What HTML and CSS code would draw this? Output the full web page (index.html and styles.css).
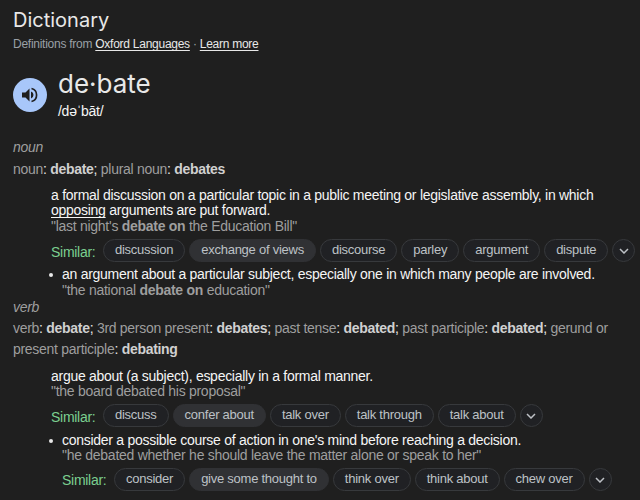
FILE: index.html
```html
<!DOCTYPE html>
<html lang="en">
<head>
<meta charset="utf-8">
<title>Dictionary</title>
<link rel="stylesheet" href="styles.css">
</head>
<body>
<main class="dictionary">
  <h1 class="title">Dictionary</h1>
  <p class="source">Definitions from <a>Oxford Languages</a> · <a>Learn more</a></p>
  <header class="headword">
    <button class="listen" aria-label="Listen">
      <svg viewBox="0 0 20 20" width="20" height="20"><path d="M2 7.500h3.500L9.500 3.500v13L5.500 12.500H2z"/><path d="M11 6.500a3.700 3.700 0 0 1 0 7z"/><path class="wave" d="M11.500 3.500a6.700 6.700 0 0 1 0 13"/></svg>
    </button>
    <div>
      <h2 class="word">de·bate</h2>
      <p class="phonetic">/dəˈbāt/</p>
    </div>
  </header>

  <section class="noun">
    <h3 class="pos">noun</h3>
    <p class="forms">noun<i>:</i> <b>debate</b><i>;</i> plural noun<i>:</i> <b>debates</b></p>
    <div class="sense">
      <p>a formal discussion on a particular topic in a public meeting or legislative assembly, in which<br><u>opposing</u> arguments are put forward.</p>
      <p class="example">"last night's <b>debate on</b> the Education Bill"</p>
      <div class="similar"><span class="label">Similar:</span><span class="chip">discussion</span><span class="chip filled">exchange of views</span><span class="chip">discourse</span><span class="chip">parley</span><span class="chip">argument</span><span class="chip">dispute</span><span class="more"><svg viewBox="0 0 10 6" width="10" height="6"><path d="M1 1l4 4 4-4"/></svg></span></div>
    </div>
    <div class="sense sub">
      <p>an argument about a particular subject, especially one in which many people are involved.</p>
      <p class="example">"the national <b>debate on</b> education"</p>
    </div>
  </section>

  <section class="verb">
    <h3 class="pos">verb</h3>
    <p class="forms">verb<i>:</i> <b>debate</b><i>;</i> 3rd person present<i>:</i> <b>debates</b><i>;</i> past tense<i>:</i> <b>debated</b><i>;</i> past participle<i>:</i> <b>debated</b><i>;</i> gerund or<br>present participle<i>:</i> <b>debating</b></p>
    <div class="sense">
      <p>argue about (a subject), especially in a formal manner.</p>
      <p class="example">"the board debated his proposal"</p>
      <div class="similar"><span class="label">Similar:</span><span class="chip">discuss</span><span class="chip filled">confer about</span><span class="chip">talk over</span><span class="chip">talk through</span><span class="chip">talk about</span><span class="more"><svg viewBox="0 0 10 6" width="10" height="6"><path d="M1 1l4 4 4-4"/></svg></span></div>
    </div>
    <div class="sense sub">
      <p>consider a possible course of action in one's mind before reaching a decision.</p>
      <p class="example">"he debated whether he should leave the matter alone or speak to her"</p>
      <div class="similar"><span class="label">Similar:</span><span class="chip">consider</span><span class="chip filled">give some thought to</span><span class="chip">think over</span><span class="chip">think about</span><span class="chip">chew over</span><span class="more"><svg viewBox="0 0 10 6" width="10" height="6"><path d="M1 1l4 4 4-4"/></svg></span></div>
    </div>
  </section>
</main>
</body>
</html>
```
FILE: styles.css
```css
* { box-sizing: border-box; }
body {
  margin: 0;
  height: 500px;
  overflow: hidden;
  background: #1f1f1f;
  color: #f5f5f5;
  font-family: "Liberation Sans", Arial, sans-serif;
  font-size: 14px;
  letter-spacing: -0.275px;
  line-height: 15.400px;
}
h1, h2, h3, p { margin: 0; font-weight: 400; white-space: nowrap; }
.dictionary { padding: 7px 0 0 13px; }
.title { font: 400 20px/26px Inter, sans-serif; letter-spacing: 0; color: #e8e8e8; }
.source { margin-top: 3px; font-size: 12px; letter-spacing: -0.260px; line-height: 16px; color: #9aa0a6; }
.source a { color: #e8e8e8; text-decoration: underline; text-underline-offset: 2px; }
.headword { display: flex; gap: 11px; height: 68px; margin-top: 16px; }
.listen {
  display: flex; align-items: center; justify-content: center;
  width: 34px; height: 34px; margin-top: 10px; padding: 0;
  border: 0; border-radius: 50%; background: #a8c7fa;
}
.listen svg { fill: #1f1f1f; }
.wave { fill: none; stroke: #1f1f1f; stroke-width: 1.700; }
.word { font: 400 26px/32px Inter, sans-serif; letter-spacing: 0; color: #e8e8e8; }
.phonetic { margin-top: 3px; line-height: 16px; }
.pos { height: 16px; font-size: 14px; line-height: 17px; font-style: italic; color: #9e9e9e; }
.noun { padding-top: 4px; }
.noun .pos { line-height: 15px; }
.verb .pos { line-height: 16px; }
.forms { line-height: 21px; letter-spacing: -0.290px; margin: 3px 0 0; color: #9e9e9e; }
.forms b { color: #d0d0d0; }
.forms i { font-style: normal; color: #e8e8e8; }
.sense { margin-left: 38px; }
.forms + .sense { padding-top: 8px; }
.example { color: #9e9e9e; }
.sense u { text-underline-offset: 2px; }
.similar { display: flex; align-items: center; gap: 4px; height: 23px; margin: 5px 0 5px; }
.label { width: 48px; padding-top: 3px; color: #7bcf8f; }
.chip {
  height: 23px; padding: 0 11px; border: 1px solid #37393c; border-radius: 12px;
  background: #202124; color: #bdc1c6; font-size: 13px; letter-spacing: -0.250px; line-height: 20px; white-space: nowrap;
}
.filled { background: #303134; border-color: #303134; }
.more {
  display: flex; align-items: center; justify-content: center;
  width: 23px; height: 23px; border: 1px solid #37393c; border-radius: 50%; background: #202124;
}
.more svg { fill: none; stroke: #bdc1c6; stroke-width: 1.500; }
.verb { padding-top: 1px; }
.verb .forms + .sense { padding-top: 9px; }
.verb .similar { margin: 4.500px 0 5.500px; }
.sub { position: relative; margin-left: 49px; }
.sub::before {
  content: ""; position: absolute; left: -13px; top: 6px;
  width: 4px; height: 4px; border-radius: 50%; background: #e8e8e8;
}
```
